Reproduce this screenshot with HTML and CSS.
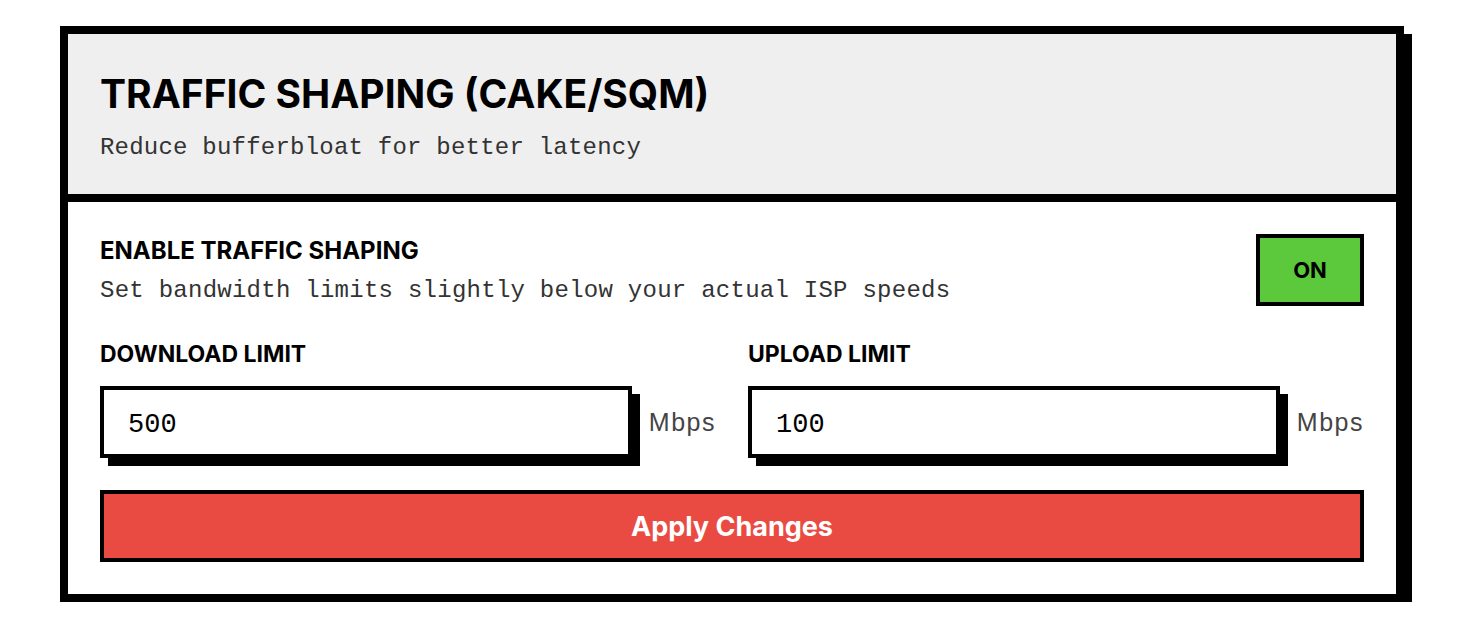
FILE: index.html
```html
<!DOCTYPE html>
<html lang="en">
<head>
  <meta charset="UTF-8">
  <title>Traffic Shaping</title>
  <link rel="stylesheet" href="styles.css">
</head>
<body>
  <div class="card">
    <div class="card-head">
      <h1>TRAFFIC SHAPING (CAKE/SQM)</h1>
      <p class="sub">Reduce bufferbloat for better latency</p>
    </div>

    <div class="card-body">
      <div class="toggle-row">
        <div>
          <div class="toggle-title">ENABLE TRAFFIC SHAPING</div>
          <div class="toggle-desc">Set bandwidth limits slightly below your actual ISP speeds</div>
        </div>
        <button class="toggle on">ON</button>
      </div>

      <div class="limits">
        <div class="limit">
          <label for="down">DOWNLOAD LIMIT</label>
          <div class="field">
            <input type="text" id="down" value="500">
            <span class="unit">Mbps</span>
          </div>
        </div>
        <div class="limit">
          <label for="up">UPLOAD LIMIT</label>
          <div class="field">
            <input type="text" id="up" value="100">
            <span class="unit">Mbps</span>
          </div>
        </div>
      </div>

      <button class="apply">Apply Changes</button>
    </div>
  </div>
</body>
</html>
```

FILE: styles.css
```css
body {
  margin: 0;
  padding: 26px 0 0 60px;
  background: #fff;
  color: #000;
  font-family: 'Inter', 'Liberation Sans', sans-serif;
}
.card {
  width: 1344px;
  box-sizing: border-box;
  border: 8px solid #000;
  box-shadow: 8px 8px 0 #000;
  background: #fff;
}
.card-head {
  background: #efefef;
  border-bottom: 8px solid #000;
  padding: 36px 32px 32px;
}
h1 {
  margin: 0;
  font-size: 39px;
  line-height: 48px;
  font-weight: 700;
}
.sub {
  margin: 16px 0 0 0;
  font-family: 'Liberation Mono', monospace;
  font-size: 24px;
  line-height: 28px;
  letter-spacing: 0.22px;
  color: #333;
}
.card-body { padding: 32px; }

.toggle-row { display: flex; justify-content: space-between; align-items: center; }
.toggle-title { font-size: 24px; line-height: 32px; font-weight: 700; }
.toggle-desc {
  margin-top: 10px;
  font-family: 'Liberation Mono', monospace;
  font-size: 24px;
  line-height: 28px;
  letter-spacing: 0.26px;
  color: #333;
}
.toggle {
  width: 108px; height: 72px;
  border: 4px solid #000;
  background: #ccc;
  font-family: inherit;
  font-size: 22px;
  font-weight: 700;
  cursor: pointer;
}
.toggle.on { background: #5cc83b; }

.limits { display: grid; grid-template-columns: 1fr 1fr; gap: 32px; margin-top: 36px; }
.limit label { display: block; font-size: 23px; line-height: 24px; font-weight: 700; }
.field { display: flex; align-items: center; gap: 17px; margin-top: 20px; }
.field input {
  flex: 1; min-width: 0;
  height: 72px;
  box-sizing: border-box;
  border: 4px solid #000;
  box-shadow: 8px 8px 0 #000;
  padding: 5px 24px 0;
  font-family: 'Liberation Mono', monospace;
  font-size: 27px;
  color: #000;
  outline: none;
}
.unit {
  font-family: 'Liberation Sans', sans-serif;
  font-size: 25px;
  letter-spacing: 1.5px;
  color: #444;
}

.apply {
  display: block;
  width: 100%;
  height: 72px;
  margin-top: 32px;
  border: 4px solid #000;
  background: #e94b43;
  color: #fff;
  font-family: inherit;
  font-size: 27px;
  font-weight: 700;
  cursor: pointer;
}
```
